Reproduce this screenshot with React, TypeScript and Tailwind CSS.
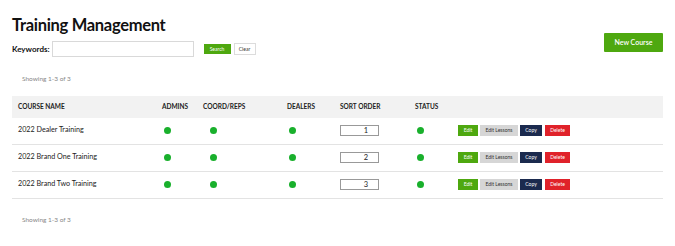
import React from "react";

type Course = { name: string; order: number };

const courses: Course[] = [
  { name: "2022 Dealer Training", order: 1 },
  { name: "2022 Brand One Training", order: 2 },
  { name: "2022 Brand Two Training", order: 3 },
];

const cols = "grid grid-cols-[144px_41px_84px_53px_75px_43px_1fr] items-center px-[6px]";

function Dot({ className = "" }: { className?: string }) {
  return <span className={`block h-[7px] w-[7px] rounded-full bg-[#19b02c] ${className}`} />;
}

export default function App() {
  return (
    <div className="h-[246px] w-[675px] bg-white px-[12px] pt-[14px] font-['Lato','Open_Sans',sans-serif] text-[#222]">
      <div className="flex items-start justify-between">
        <div>
          <h1 className="text-[16.5px] font-bold leading-[22px] tracking-[-0.3px] text-[#111]">Training Management</h1>
          <div className="mt-[5px] flex items-center">
            <label className="text-[8px] font-bold text-[#111]">Keywords:</label>
            <input className="ml-[2px] h-[16px] w-[142px] border border-[#d9d9d9] bg-white" />
            <button className="ml-[10px] h-[10px] w-[27px] bg-[#4ea80f] text-[5px] leading-[10px] text-white">
              Search
            </button>
            <button className="ml-[3px] h-[12px] w-[22px] border border-[#dcdcdc] bg-white text-[5px] leading-[10px] text-[#333]">
              Clear
            </button>
          </div>
        </div>
        <button className="mt-[19px] h-[19px] w-[59px] rounded-[1px] bg-[#4ea80f] text-[7px] font-semibold text-white">
          New Course
        </button>
      </div>

      <p className="mt-[17px] pl-[10px] text-[6.5px] text-[#888]">Showing 1-3 of 3</p>

      <div className="mt-[12px]">
        <div className={`${cols} h-[22px] bg-[#f2f2f2] text-[6.5px] font-bold uppercase text-[#222]`}>
          <span>Course Name</span>
          <span>Admins</span>
          <span>Coord/Reps</span>
          <span>Dealers</span>
          <span>Sort Order</span>
          <span>Status</span>
          <span />
        </div>
        {courses.map((c) => (
          <div key={c.name} className={`${cols} h-[27px] border-b border-[#e3e3e3] text-[7.2px] text-[#222]`}>
            <span>{c.name}</span>
            <Dot className="ml-[2px]" />
            <Dot className="ml-[7px]" />
            <Dot className="ml-[2px]" />
            <span className="block h-[11px] w-[39px] border border-[#999] pr-[10px] text-right text-[7.5px] leading-[9px]">
              {c.order}
            </span>
            <Dot className="ml-[2px]" />
            <div className="flex gap-[2px] text-[5px] leading-[11px]">
              <span className="h-[11px] w-[20px] bg-[#4ea80f] text-center text-white">Edit</span>
              <span className="h-[11px] w-[38px] bg-[#d6d6d6] text-center text-[#333]">Edit Lessons</span>
              <span className="h-[11px] w-[22px] bg-[#1b2a4e] text-center text-white">Copy</span>
              <span className="ml-[1px] h-[11px] w-[25px] bg-[#e0222a] text-center text-white">Delete</span>
            </div>
          </div>
        ))}
      </div>

      <p className="mt-[16px] pl-[10px] text-[6.5px] text-[#888]">Showing 1-3 of 3</p>
    </div>
  );
}
